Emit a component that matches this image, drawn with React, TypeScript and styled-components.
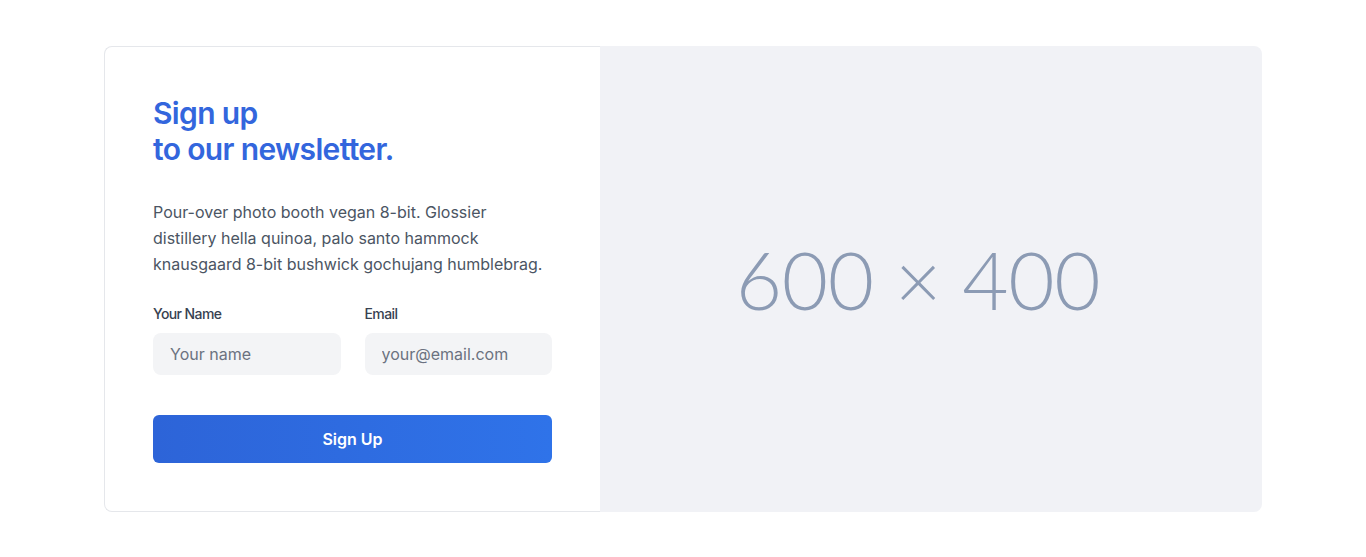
import React from "react";
import styled, { createGlobalStyle } from "styled-components";

const Global = createGlobalStyle`
  html, body { margin: 0; padding: 0; background: #ffffff; }
  body { font-family: Inter, "Noto Sans", sans-serif; -webkit-font-smoothing: antialiased; }
  * { box-sizing: border-box; }
`;

const Page = styled.div`
  padding-top: 46px;
  display: flex;
  justify-content: center;
`;

const Card = styled.section`
  width: 1158px;
  height: 466px;
  display: flex;
`;

const FormPanel = styled.div`
  width: 496px;
  flex: none;
  border: 1px solid #e5e7eb;
  border-right: none;
  border-radius: 8px 0 0 8px;
  padding: 48px;
  display: flex;
  flex-direction: column;
`;

const Title = styled.h2`
  margin: 0;
  font-size: 30px;
  line-height: 36px;
  font-weight: 600;
  color: #3366dd;
  letter-spacing: -0.65px;
`;

const Text = styled.p`
  margin: 32px 0 0;
  font-size: 16px;
  line-height: 26px;
  color: #4b5563;
`;

const Fields = styled.div`
  margin-top: 27px;
  display: grid;
  grid-template-columns: 1fr 1fr;
  column-gap: 24px;
`;

const Field = styled.label`
  display: flex;
  flex-direction: column;
`;

const Label = styled.span`
  font-size: 14px;
  line-height: 20px;
  font-weight: 500;
  color: #374151;
  margin-bottom: 9px;
  letter-spacing: -0.6px;
`;

const Input = styled.input`
  height: 42px;
  width: 100%;
  border: none;
  outline: none;
  border-radius: 8px;
  background: #f3f4f6;
  padding: 0 17px;
  font-family: Inter, "Noto Sans", sans-serif;
  font-size: 16px;
  color: #111827;
  &::placeholder { color: #6b7280; }
`;

const Button = styled.button`
  margin-top: 40px;
  height: 48px;
  width: 100%;
  border: none;
  border-radius: 6px;
  background: linear-gradient(90deg, #2d64d8 0%, #2f73e9 100%);
  color: #ffffff;
  font-family: Inter, "Noto Sans", sans-serif;
  font-size: 16px;
  font-weight: 600;
  cursor: pointer;
`;

const ImagePanel = styled.div`
  flex: 1;
  background: #f1f2f6;
  border-radius: 0 8px 8px 0;
  display: flex;
  align-items: center;
  justify-content: center;
`;

const Placeholder = styled.span`
  font-family: Lato, "Open Sans", sans-serif;
  font-weight: 300;
  font-size: 80px;
  line-height: 1;
  color: #8c9bb4;
  padding-right: 26px;
  letter-spacing: -0.4px;
`;

export default function App() {
  return (
    <>
      <Global />
      <Page>
        <Card>
          <FormPanel>
            <Title>
              Sign up
              <br />
              to our newsletter.
            </Title>
            <Text>
              Pour-over photo booth vegan 8-bit. Glossier distillery hella quinoa, palo santo hammock
              knausgaard 8-bit bushwick gochujang humblebrag.
            </Text>
            <Fields>
              <Field>
                <Label>Your Name</Label>
                <Input placeholder="Your name" />
              </Field>
              <Field>
                <Label>Email</Label>
                <Input placeholder="your@email.com" />
              </Field>
            </Fields>
            <Button>Sign Up</Button>
          </FormPanel>
          <ImagePanel>
            <Placeholder>600 × 400</Placeholder>
          </ImagePanel>
        </Card>
      </Page>
    </>
  );
}
